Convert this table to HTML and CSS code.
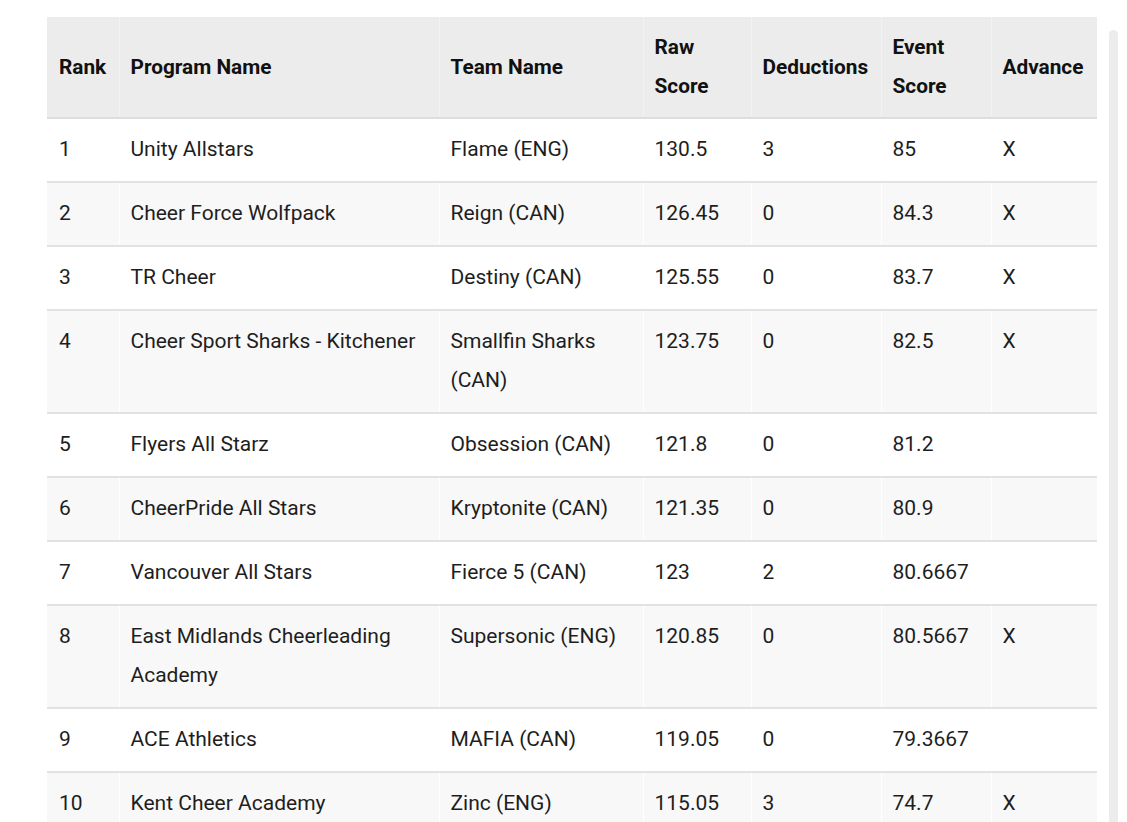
FILE: index.html
```html
<!DOCTYPE html>
<html lang="en">
<head>
<meta charset="utf-8">
<title>Results</title>
<link rel="stylesheet" href="styles.css">
</head>
<body>
<div class="page">
  <div class="table-wrap">
    <table class="results">
      <colgroup>
        <col class="c-rank"><col class="c-prog"><col class="c-team"><col class="c-raw"><col class="c-ded"><col class="c-event"><col class="c-adv">
      </colgroup>
      <thead>
        <tr>
          <th>Rank</th><th>Program Name</th><th>Team Name</th><th>Raw Score</th><th>Deductions</th><th>Event Score</th><th>Advance</th>
        </tr>
      </thead>
      <tbody>
        <tr><td>1</td><td>Unity Allstars</td><td>Flame (ENG)</td><td>130.5</td><td>3</td><td>85</td><td>X</td></tr>
        <tr><td>2</td><td>Cheer Force Wolfpack</td><td>Reign (CAN)</td><td>126.45</td><td>0</td><td>84.3</td><td>X</td></tr>
        <tr><td>3</td><td>TR Cheer</td><td>Destiny (CAN)</td><td>125.55</td><td>0</td><td>83.7</td><td>X</td></tr>
        <tr><td>4</td><td>Cheer Sport Sharks - Kitchener</td><td>Smallfin Sharks (CAN)</td><td>123.75</td><td>0</td><td>82.5</td><td>X</td></tr>
        <tr><td>5</td><td>Flyers All Starz</td><td>Obsession (CAN)</td><td>121.8</td><td>0</td><td>81.2</td><td></td></tr>
        <tr><td>6</td><td>CheerPride All Stars</td><td>Kryptonite (CAN)</td><td>121.35</td><td>0</td><td>80.9</td><td></td></tr>
        <tr><td>7</td><td>Vancouver All Stars</td><td>Fierce 5 (CAN)</td><td>123</td><td>2</td><td>80.6667</td><td></td></tr>
        <tr><td>8</td><td>East Midlands Cheerleading Academy</td><td>Supersonic (ENG)</td><td>120.85</td><td>0</td><td>80.5667</td><td>X</td></tr>
        <tr><td>9</td><td>ACE Athletics</td><td>MAFIA (CAN)</td><td>119.05</td><td>0</td><td>79.3667</td><td></td></tr>
        <tr><td>10</td><td>Kent Cheer Academy</td><td>Zinc (ENG)</td><td>115.05</td><td>3</td><td>74.7</td><td>X</td></tr>
      </tbody>
    </table>
  </div>
  <div class="scrollbar"></div>
</div>
</body>
</html>
```
FILE: styles.css
```css
html, body {
  margin: 0;
  padding: 0;
  background: #ffffff;
  overflow: hidden;
  height: 822px;
}

.page {
  display: flex;
  align-items: flex-start;
  padding: 17px 0 0 47px;
  height: 805px;
  overflow: hidden;
  font-family: Roboto, "Liberation Sans", sans-serif;
  color: #1e1e1e;
}

.table-wrap {
  width: 1050px;
  flex: none;
}

.results {
  width: 1050px;
  table-layout: fixed;
  border-collapse: collapse;
  font-size: 21px;
  line-height: 39px;
}

.c-rank { width: 72px; }
.c-prog { width: 320px; }
.c-team { width: 204px; }
.c-raw { width: 108px; }
.c-ded { width: 130px; }
.c-event { width: 110px; }
.c-adv { width: 106px; }

.results th {
  background: #ececec;
  color: #111111;
  font-size: 20.8px;
  font-weight: 700;
  text-align: left;
  vertical-align: middle;
  padding: 11px 4px 11px 11px;
  border-bottom: 2px solid #dedede;
  border-left: 1px solid #f2f2f2;
}

.results td {
  vertical-align: top;
  padding: 11px 6px 12px 11px;
  border-bottom: 2px solid #e2e2e2;
  border-left: 1px solid #ffffff;
  font-weight: 400;
}

.results th:first-child,
.results td:first-child {
  border-left: none;
  padding-left: 12px;
}

.results tbody tr:nth-child(even) td {
  background: #f8f8f8;
}

.scrollbar {
  flex: none;
  width: 9px;
  height: 820px;
  margin: 13px 0 0 12px;
  background: #ececec;
  border-radius: 5px 5px 0 0;
}
```
